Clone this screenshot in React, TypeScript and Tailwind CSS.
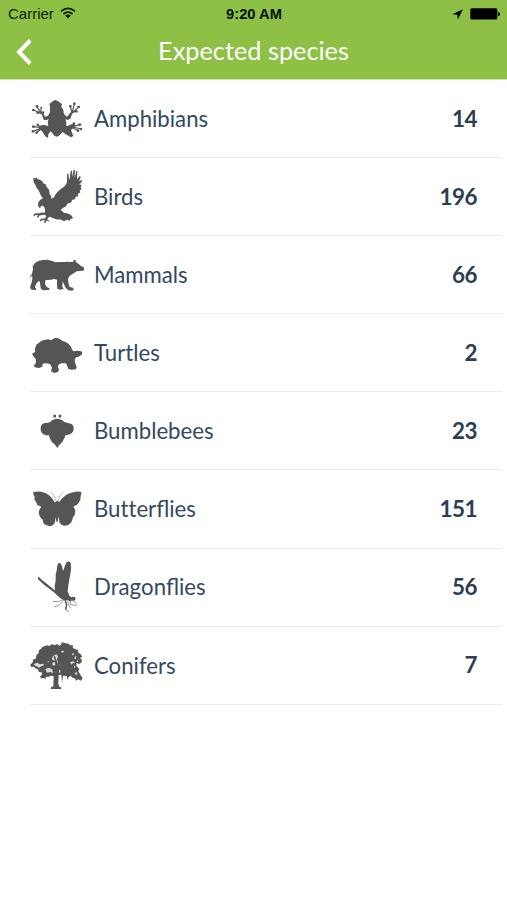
import type { ReactNode } from "react";

type Species = {
  name: string;
  count: number;
  viewBox: string;
  icon: ReactNode;
};

const species: Species[] = [
  {
    name: "Amphibians",
    count: 14,
    viewBox: "0 -12 210 192",
    icon: (
      <>
        <path d="M94 29 L101 27 L108 31 L113 34 L120 40 L118 47 L124 56 L125 65 L128 72 L136 77 L144 66 L151 61 L157 62 L150 69 L145 83 L137 87 L130 84 L133 94 L132 104 L138 104 L152 98 L160 102 L155 109 L147 118 L154 135 L147 139 L131 130 L121 122 L117 128 L111 134 L104 137 L97 134 L91 127 L86 121 L79 130 L78 141 L70 136 L59 119 L49 112 L53 104 L65 101 L79 105 L77 93 L80 83 L73 88 L65 86 L59 70 L51 65 L54 60 L63 66 L70 78 L79 73 L84 64 L84 53 L84 45 L82 39 Z" />
        <g fill="none" stroke="currentColor" strokeWidth="3.5">
          <path d="M57 66 L45 47 M57 66 L34 57 M57 66 L45 65 M57 64 L57 52 M150 66 L145 46 M150 66 L157 39 M150 65 L170 49 M151 65 L163 60 M58 110 L34 107 M58 112 L32 121 M57 109 L46 101 M58 114 L43 125 M151 107 L157 98 M151 107 L178 100 M151 108 L179 114 M151 110 L169 119" />
        </g>
        <circle cx="45" cy="46" r="4" /><circle cx="34" cy="57" r="4" /><circle cx="58" cy="50" r="3" />
        <circle cx="47" cy="65" r="4" /><circle cx="63" cy="65" r="4" />
        <circle cx="145" cy="46" r="4" /><circle cx="157" cy="38" r="4" /><circle cx="170" cy="48" r="4" /><circle cx="163" cy="61" r="4" />
        <circle cx="34" cy="107" r="4" /><circle cx="33" cy="121" r="4" /><circle cx="47" cy="101" r="3.5" /><circle cx="44" cy="125" r="4" />
        <circle cx="156" cy="98" r="4" /><circle cx="173" cy="101" r="4" /><circle cx="177" cy="114" r="4" /><circle cx="168" cy="119" r="4" />
      </>
    ),
  },
  {
    name: "Birds",
    count: 196,
    viewBox: "0 -1.5 210 192",
    icon: (
      <path d="M34 36 L39 39 L43 36 L48 41 L54 43 L61 47 L64 53 L71 57 L75 66 L81 73 L83 86 L88 92 L87 99 L96 96 L100 87 L108 78 L117 70 L126 64 L132 57 L135 49 L135 28 L139 22 L141 43 L143 39 L146 17 L150 14 L150 36 L154 15 L159 13 L157 38 L163 17 L166 16 L165 41 L174 31 L176 35 L171 48 L179 43 L180 47 L172 58 L179 58 L176 66 L179 70 L173 76 L175 81 L168 85 L168 92 L161 94 L159 101 L151 103 L147 111 L137 114 L131 123 L122 128 L116 133 L126 142 L140 145 L149 151 L153 158 L145 161 L143 166 L134 163 L126 167 L116 162 L104 162 L91 157 L82 154 L76 160 L77 164 L82 165 L80 169 L73 165 L70 173 L66 171 L69 164 L59 164 L55 168 L53 163 L60 159 L67 160 L73 154 L71 149 L65 148 L58 149 L52 150 L48 158 L45 153 L48 148 L39 149 L36 153 L34 147 L42 143 L52 143 L59 141 L68 142 L70 135 L66 124 L62 120 L57 122 L54 128 L49 123 L48 115 L51 107 L56 102 L63 98 L57 91 L54 84 L50 75 L43 66 L40 58 L35 50 Z" />
    ),
  },
  {
    name: "Mammals",
    count: 66,
    viewBox: "0 -16 210 192",
    icon: (
      <path d="M25 88 L25 82 L30 77 L33 62 L32 54 L38 45 L49 38 L62 35 L75 34 L88 37 L101 42 L114 41 L127 41 L135 40 L147 41 L154 40 L155 34 L160 35 L162 41 L170 47 L177 53 L185 57 L187 61 L184 67 L172 68 L164 69 L155 75 L146 80 L140 87 L138 94 L140 108 L143 116 L153 118 L155 124 L150 127 L139 126 L131 118 L126 108 L122 99 L121 116 L125 122 L114 124 L106 121 L105 108 L105 94 L97 92 L87 94 L75 95 L70 96 L69 106 L73 115 L82 120 L82 125 L64 126 L57 122 L55 113 L54 102 L51 98 L46 102 L41 110 L39 117 L43 122 L41 125 L29 124 L24 119 L26 110 L30 100 L31 88 L30 81 Z" />
    ),
  },
  {
    name: "Turtles",
    count: 2,
    viewBox: "0 -21 210 192",
    icon: (
      <path d="M31 76 L39 73 L39 61 L43 50 L50 45 L58 39 L66 36 L79 34 L87 37 L94 32 L104 29 L113 33 L121 38 L132 43 L140 48 L147 56 L150 64 L154 70 L166 68 L178 70 L181 75 L178 81 L170 86 L162 88 L158 95 L160 107 L164 117 L162 124 L149 125 L139 123 L136 115 L132 106 L119 106 L111 109 L107 117 L111 124 L108 132 L97 135 L87 130 L90 119 L84 108 L72 106 L62 107 L61 116 L51 120 L38 118 L36 112 L42 104 L41 93 L36 87 L32 82 Z" />
    ),
  },
  {
    name: "Bumblebees",
    count: 23,
    viewBox: "0 -21 210 192",
    icon: (
      <>
        <path d="M90 43 Q105 34 121 43 Q125 50 137 51 Q154 52 155 65 Q156 79 143 85 Q136 88 131 87 Q128 97 121 108 Q112 115 106 126 Q99 115 90 108 Q83 98 80 87 Q73 90 64 85 Q55 78 56 66 Q57 54 68 51 Q84 52 90 43 Z" />
        <circle cx="98" cy="30" r="4.5" />
        <circle cx="114" cy="30" r="4.5" />
        <path d="M98 31 L99 39 M113 31 L113 39" stroke="currentColor" strokeWidth="1.5" opacity=".45" />
      </>
    ),
  },
  {
    name: "Butterflies",
    count: 151,
    viewBox: "0 -20 210 192",
    icon: (
      <>
        <path d="M34 25 Q52 21 68 27 Q87 35 97 54 Q101 59 103 52 L107 51 L111 56 Q124 35 145 28 Q160 22 176 24 Q181 28 176 36 L175 49 L167 62 L154 69 Q158 73 160 82 Q160 94 153 101 Q151 112 147 117 Q139 127 126 126 Q117 125 113 118 L109 98 L107 114 L103 114 L101 99 L99 115 Q94 126 84 128 Q72 127 64 119 L62 108 Q52 101 50 88 Q52 75 58 69 L46 64 L41 52 L37 48 L38 39 L34 32 Z" />
        <path d="M102 53 Q101 37 86 24 M108 53 Q110 35 125 24" fill="none" stroke="currentColor" strokeWidth="1.8" opacity=".65" />
      </>
    ),
  },
  {
    name: "Dragonflies",
    count: 56,
    viewBox: "0 -1.5 210 192",
    icon: (
      <>
        <path d="M47 65 L52 65 L59 73 L77 87 L99 105 L98 92 L101 75 L101 58 L104 45 L106 30 L110 22 L117 25 L121 36 L123 47 L128 34 L133 21 L140 17 L146 22 L147 38 L146 51 L142 72 L139 89 L137 108 L143 122 L149 125 L158 124 L161 130 L157 136 L151 135 L143 137 L138 134 L129 135 L116 129 L105 119 L97 111 L82 100 L65 87 L49 72 Z" />
        <path d="M124 132 Q109 142 92 138 M125 134 Q115 151 96 154 M129 134 L134 148 L131 163 L141 170 M137 136 L141 151 L148 157 M145 134 L146 147 L164 150 M149 132 L164 144" fill="none" stroke="currentColor" strokeWidth="3" opacity=".6" />
        <path d="M129 134 L134 148 L131 162" fill="none" stroke="currentColor" strokeWidth="4" />
      </>
    ),
  },
  {
    name: "Conifers",
    count: 7,
    viewBox: "0 -7 210 192",
    icon: (
      <>
        <path d="M51 45 L59 39 L62 34 L76 30 L83 32 L88 27 L99 29 L105 26 L113 31 L118 27 L119 21 L131 24 L140 25 L144 30 L153 30 L152 37 L160 42 L169 44 L167 51 L175 55 L181 64 L174 67 L180 75 L178 82 L171 86 L163 83 L164 93 L172 100 L169 108 L177 121 L182 129 L177 136 L168 132 L163 136 L157 128 L151 127 L146 121 L140 125 L137 134 L134 122 L123 121 L120 143 L118 118 L110 119 L109 145 L112 154 L119 157 L117 161 L86 161 L87 156 L94 153 L95 123 L85 121 L80 125 L72 124 L70 131 L64 128 L57 129 L54 123 L60 118 L59 111 L50 110 L49 103 L40 99 L36 94 L27 95 L25 87 L31 83 L34 72 L41 71 L43 60 L50 53 Z" />
        <path d="M35 87 L45 82 L54 87 L64 85 L66 90 L58 93 L51 97 L42 92 Z M70 101 L81 97 L91 102 L93 114 L85 110 L75 112 Z M93 63 L103 57 L108 63 L105 72 L108 82 L104 86 L101 76 L94 75 L89 71 Z M91 82 L99 80 L100 89 L92 91 Z M112 87 L120 83 L118 90 L111 96 Z M144 81 L153 78 L159 82 L152 84 L149 88 Z M156 92 L160 91 L159 97 L156 97 Z M117 49 L123 45 L126 50 L119 52 Z M149 55 L154 54 L157 59 L152 60 Z M158 64 L163 62 L162 71 L157 71 Z M165 76 L169 74 L168 80 L164 79 Z M75 80 L82 77 L81 81 Z M158 112 L165 111 L166 118 L161 118 Z M111 105 L115 103 L115 111 L111 113 Z" fill="#dcdcdc" />
        <path d="M103 158 L102 105 L82 91 M103 111 L105 87 L97 63 M105 101 L119 84 L122 56" fill="none" stroke="currentColor" strokeWidth="5" />
      </>
    ),
  },
];

function StatusBar() {
  return (
    <div className="grid h-7 grid-cols-3 items-center pr-[7px] pl-2 text-[#101d05]">
      <div className="flex items-center gap-1.5">
        <span className="mt-px font-['Liberation_Sans',sans-serif] text-[15px]">Carrier</span>
        <svg className="-mt-[3px] h-3 w-4" viewBox="0 0 16 12" fill="none" stroke="currentColor">
          <path d="M1 4.4 Q8 -1.6 15 4.4 M3.4 7 Q8 3.2 12.6 7" strokeWidth="1.7" />
          <path d="M5.1 8.6 Q8 6.3 10.9 8.6 L8 11.6 Z" fill="currentColor" stroke="none" />
        </svg>
      </div>
      <span className="text-center font-['Liberation_Sans',sans-serif] text-[14.7px] font-bold whitespace-nowrap text-[#081002]">9:20 AM</span>
      <div className="flex items-center justify-end gap-[7px] text-black">
        <svg className="h-[11px] w-[11px]" viewBox="0 0 11 11" fill="currentColor">
          <path d="M11 .3 L5.8 10.6 L5.3 5.7 L.3 5.3 Z" />
        </svg>
        <svg className="-mt-px h-3 w-[30px]" viewBox="0 0 30 12" fill="currentColor">
          <rect x=".3" y=".3" width="27" height="11.2" rx="1.5" />
          <path d="M28 3.8 Q30 4.3 30 6 Q30 7.7 28 8.2 Z" />
        </svg>
      </div>
    </div>
  );
}

function SpeciesRow({ name, count, viewBox, icon }: Species) {
  return (
    <li className="mr-[5px] ml-[30px] flex h-[78.1px] items-center border-b border-[#ebebeb] pr-[25px]">
      <svg className="-ml-2 h-16 w-[70px] shrink-0 text-[#555]" viewBox={viewBox} fill="currentColor">
        {icon}
      </svg>
      {/* Lato joins "tt" as well as "fl"; only the "fl" ligature is wanted */}
      <span className="ml-0.5 flex-1 text-[22.2px] text-[#34495e]">
        <span className="[font-variant-ligatures:none]">{name.slice(0, 4)}</span>
        {name.slice(4)}
      </span>
      <span className="text-[22.4px] font-bold tracking-[-0.5px] text-[#2c3e50]">{count}</span>
    </li>
  );
}

export default function App() {
  return (
    <div className="min-h-[900px] bg-white font-['Lato',sans-serif]">
      <header className="h-20 border-b border-[#cfe5ae] bg-[#8dc044]">
        <StatusBar />
        <div className="grid h-[46px] grid-cols-[60px_1fr_60px] items-center">
          <button className="pl-4" aria-label="Back">
            <svg className="mt-0.5 h-[26px] w-4" viewBox="0 0 16 26" fill="none" stroke="#fff" strokeWidth="4">
              <path d="M14.2 1.5 L3 13 L14.2 24.5" />
            </svg>
          </button>
          <h1 className="text-center text-[25.3px] text-white">Expected species</h1>
        </div>
      </header>
      <ul>
        {species.map((item) => (
          <SpeciesRow key={item.name} {...item} />
        ))}
      </ul>
    </div>
  );
}
